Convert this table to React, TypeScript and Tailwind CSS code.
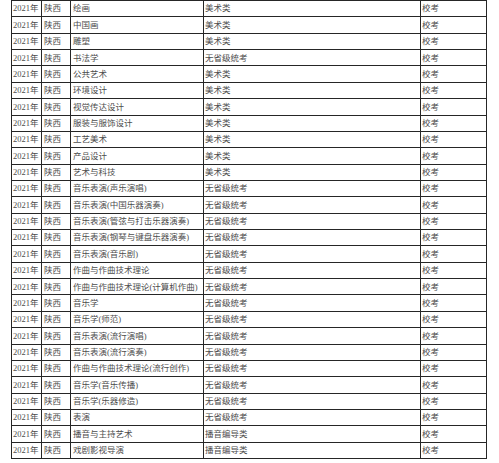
import React from "react";

const rows: [string, string][] = [
  ["绘画", "美术类"],
  ["中国画", "美术类"],
  ["雕塑", "美术类"],
  ["书法学", "无省级统考"],
  ["公共艺术", "美术类"],
  ["环境设计", "美术类"],
  ["视觉传达设计", "美术类"],
  ["服装与服饰设计", "美术类"],
  ["工艺美术", "美术类"],
  ["产品设计", "美术类"],
  ["艺术与科技", "美术类"],
  ["音乐表演(声乐演唱)", "无省级统考"],
  ["音乐表演(中国乐器演奏)", "无省级统考"],
  ["音乐表演(管弦与打击乐器演奏)", "无省级统考"],
  ["音乐表演(钢琴与键盘乐器演奏)", "无省级统考"],
  ["音乐表演(音乐剧)", "无省级统考"],
  ["作曲与作曲技术理论", "无省级统考"],
  ["作曲与作曲技术理论(计算机作曲)", "无省级统考"],
  ["音乐学", "无省级统考"],
  ["音乐学(师范)", "无省级统考"],
  ["音乐表演(流行演唱)", "无省级统考"],
  ["音乐表演(流行演奏)", "无省级统考"],
  ["作曲与作曲技术理论(流行创作)", "无省级统考"],
  ["音乐学(音乐传播)", "无省级统考"],
  ["音乐学(乐器修造)", "无省级统考"],
  ["表演", "无省级统考"],
  ["播音与主持艺术", "播音编导类"],
  ["戏剧影视导演", "播音编导类"],
];

const cell =
  "border-r border-b border-[#262626] flex items-center overflow-hidden whitespace-nowrap";

export default function App() {
  return (
    <div
      className="w-[499px] h-[463px] bg-white text-[#4d4d4d] text-[8.5px] leading-none"
      style={{ fontFamily: '"Liberation Serif", "Noto Sans CJK SC", serif' }}
    >
      <div className="ml-[11px] w-[476px] border-l border-t border-[#262626]">
        {rows.map(([major, cat], i) => (
          <div
            key={i}
            className="grid grid-cols-[30px_29px_133px_217px_66px] h-[16.36px]"
          >
            <div className={`${cell} pl-[1px]`}>2021年</div>
            <div className={`${cell} pl-[2px]`}>陕西</div>
            <div className={`${cell} pl-[2px]`}>{major}</div>
            <div className={`${cell} pl-[1px]`}>{cat}</div>
            <div className={`${cell} pl-[1px]`}>校考</div>
          </div>
        ))}
      </div>
    </div>
  );
}
